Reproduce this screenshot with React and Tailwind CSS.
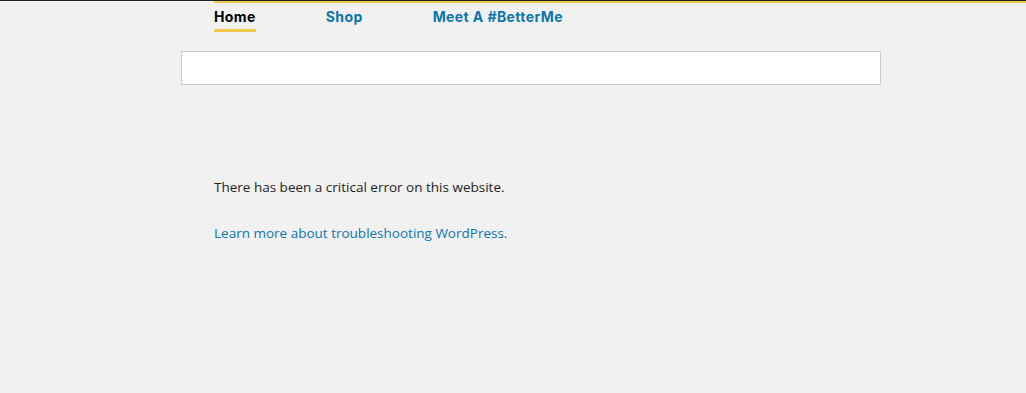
export default function App() {
  return (
    <div className="min-h-[393px] bg-[#f1f1f1] border-t border-[#1d2327] relative">
      <div className="absolute left-[214px] right-0 top-0 h-[1.5px] bg-[#f0c94a]" />
      <nav className="flex items-start h-[50px] pl-[214px] pt-[6px] font-['Inter',sans-serif] font-bold text-[14px] tracking-[0.4px]">
        <a className="relative text-black pb-[6px] leading-[20px]">
          Home
          <span className="absolute left-0 right-0 top-[22px] h-[3px] bg-[#f0c94a]" />
        </a>
        <a className="ml-[70px] text-[#0c75ad] leading-[20px]">Shop</a>
        <a className="ml-[70px] text-[#0c75ad] leading-[20px]">Meet A #BetterMe</a>
      </nav>
      <div className="ml-[181px] w-[700px] h-[34px] bg-white border border-[#cccccc]" />
      <div className="pl-[214px] pt-[92px] font-['Open_Sans',sans-serif] text-[13.5px]">
        <p className="text-[#1d2327] leading-[20px]">There has been a critical error on this website.</p>
        <p className="mt-[26px] leading-[20px]">
          <a className="text-[#0c75ad]">Learn more about troubleshooting WordPress.</a>
        </p>
      </div>
    </div>
  );
}
